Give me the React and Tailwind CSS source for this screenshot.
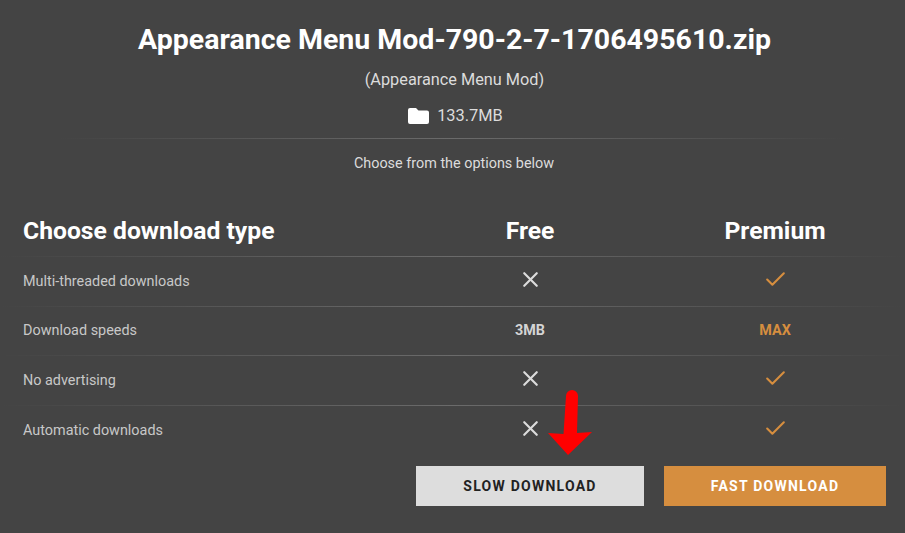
import { X, Check } from 'lucide-react'

const rows = [
  { label: 'Multi-threaded downloads', h: 'h-[49px]' },
  { label: 'Download speeds', free: '3MB', premium: 'MAX', h: 'h-[48px]' },
  { label: 'No advertising', h: 'h-[49px]' },
  { label: 'Automatic downloads', h: 'h-[49px]' },
]

const Divider = ({ className = '' }) => (
  <div className={`h-px bg-gradient-to-r from-transparent via-[#6b6b6b] to-transparent ${className}`} />
)

function Row({ label, free, premium, h }) {
  return (
    <div className={`flex items-center pl-[23px] ${h}`}>
      <div className="w-[393px] text-[14.4px] text-[#c8c8c8]">{label}</div>
      <div className="flex w-[228px] justify-center text-[14.4px] font-bold text-[#d4d4d4]">
        {free || <X size={25} strokeWidth={2.1} className="mb-1 text-[#dcdcdc]" />}
      </div>
      <div className="ml-5 flex w-[222px] justify-center text-[14.4px] font-bold text-[#d68e3f]">
        {premium || <Check size={25} strokeWidth={2} className="mb-1 text-[#d68e3f]" />}
      </div>
    </div>
  )
}

export default function App() {
  return (
    <div className="relative h-[533px] w-[905px] overflow-hidden bg-[#444444] font-['Roboto',sans-serif] text-white">
      <div className="flex flex-col items-center pt-[22px] pl-[4px]">
        <h1 className="text-[28.5px] leading-[36px] font-bold whitespace-nowrap">
          Appearance Menu Mod-790-2-7-1706495610.zip
        </h1>
        <p className="mt-[12px] text-[16.3px] leading-[20px] text-[#dcdcdc]">(Appearance Menu Mod)</p>
        <div className="mt-[16px] ml-[2px] flex h-[20px] items-center gap-[8px] text-[16.4px] text-[#dcdcdc]">
          <svg width="21" height="16" viewBox="0 0 21 16" fill="#ffffff">
            <path d="M2 0h6l2.5 2.5H19a2 2 0 0 1 2 2V14a2 2 0 0 1-2 2H2a2 2 0 0 1-2-2V2a2 2 0 0 1 2-2z" />
          </svg>
          <span>133.7MB</span>
        </div>
      </div>

      <Divider className="mx-[60px] mt-[12px]" />
      <p className="mt-[16px] pl-[3px] text-center text-[14.4px] leading-[18px] text-[#dcdcdc]">
        Choose from the options below
      </p>

      <div className="mt-[33px] flex h-[50px] items-center pl-[23px] text-[24.7px] font-bold">
        <div className="w-[393px]">Choose download type</div>
        <div className="w-[228px] text-center">Free</div>
        <div className="ml-5 w-[222px] text-center">Premium</div>
      </div>

      {rows.map((r) => (
        <div key={r.label}>
          <Divider />
          <Row {...r} />
        </div>
      ))}

      <div className="mt-[11px] flex pl-[416px]">
        <button className="h-10 w-[228px] bg-[#dddddd] text-[14px] font-bold tracking-[1.25px] text-[#222222]">
          SLOW DOWNLOAD
        </button>
        <button className="ml-5 h-10 w-[222px] bg-[#d68e3f] text-[14px] font-bold tracking-[1.25px] text-white">
          FAST DOWNLOAD
        </button>
      </div>

      {/* red arrow drawn over the table */}
      <svg className="absolute top-[388px] left-[546px]" width="50" height="70" viewBox="0 0 50 70" fill="#ff0000">
        <path d="M20 8a6 6 0 0 1 12 0L31 45L46 44L22 67L2 45L17.5 46z" />
      </svg>
    </div>
  )
}
